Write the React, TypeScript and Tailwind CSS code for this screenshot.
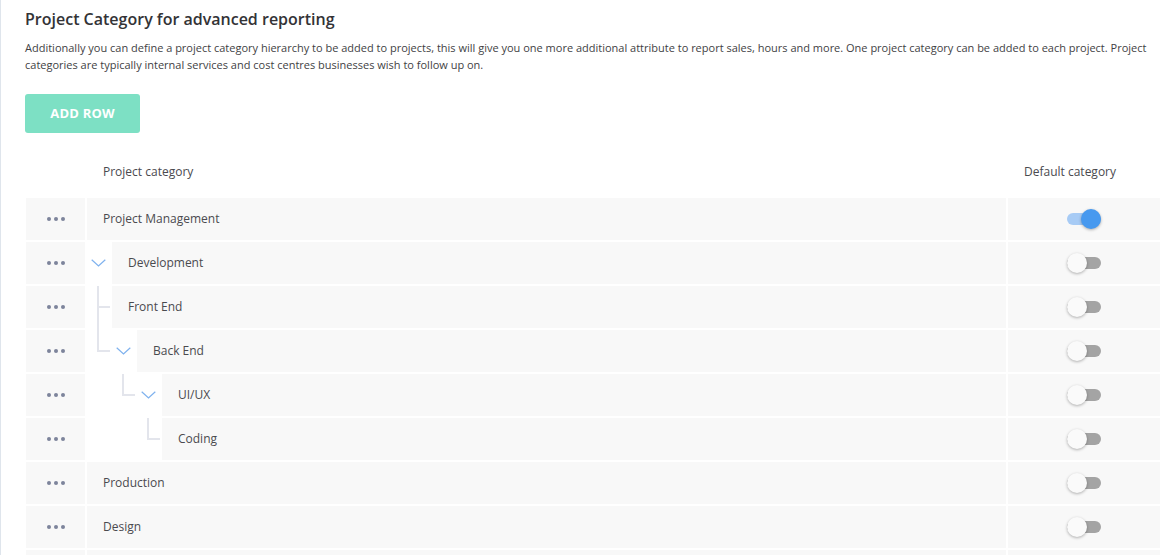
import React from "react";

type Row = {
  name: string;
  level: number;
  hasChildren?: boolean;
  isDefault?: boolean;
  // per slot: "pass" = vertical through, "end" = vertical to center + stub, "mid" = vertical through + stub
  lines?: ("none" | "pass" | "end" | "mid")[];
};

const rows: Row[] = [
  { name: "Project Management", level: 0, isDefault: true },
  { name: "Development", level: 0, hasChildren: true },
  { name: "Front End", level: 1, lines: ["mid"] },
  { name: "Back End", level: 1, hasChildren: true, lines: ["end"] },
  { name: "UI/UX", level: 2, hasChildren: true, lines: ["none", "end"] },
  { name: "Coding", level: 3, lines: ["none", "none", "end"] },
  { name: "Production", level: 0 },
  { name: "Design", level: 0 },
  { name: "", level: 0 },
];

function Dots() {
  return (
    <div className="flex items-center gap-[3px]">
      <span className="w-[4px] h-[4px] rounded-full bg-[#7d849b]" />
      <span className="w-[4px] h-[4px] rounded-full bg-[#7d849b]" />
      <span className="w-[4px] h-[4px] rounded-full bg-[#7d849b]" />
    </div>
  );
}

function Chevron() {
  return (
    <svg width="15" height="8" viewBox="0 0 15 8" fill="none">
      <path d="M0.7 0.7 L7.5 7 L14.3 0.7" stroke="#7fb2ee" strokeWidth="1.2" />
    </svg>
  );
}

function Toggle({ on }: { on?: boolean }) {
  if (on) {
    return (
      <div className="relative w-[34px] h-[20px] flex items-center">
        <div className="w-[34px] h-[12px] rounded-full bg-[#a7cbf5]" />
        <div className="absolute right-0 top-0 w-[20px] h-[20px] rounded-full bg-[#4799ef] shadow-[0_1px_3px_rgba(0,0,0,0.3)]" />
      </div>
    );
  }
  return (
    <div className="relative w-[34px] h-[20px] flex items-center">
      <div className="w-[34px] h-[12px] rounded-full bg-[#a4a4a4]" />
      <div className="absolute left-0 top-0 w-[20px] h-[20px] rounded-full bg-[#fafafa] shadow-[0_1px_3px_rgba(0,0,0,0.3)]" />
    </div>
  );
}

function Slot({ kind }: { kind: "none" | "pass" | "end" | "mid" | "chevron" }) {
  return (
    <div className="relative w-[25px] h-[44px] shrink-0">
      {kind === "chevron" && (
        <div className="absolute left-[4px] top-[17px]">
          <Chevron />
        </div>
      )}
      {(kind === "pass" || kind === "mid") && (
        <div className="absolute left-[10px] top-0 w-[2px] h-[44px] bg-[#e3e5ec]" />
      )}
      {kind === "end" && (
        <div className="absolute left-[10px] top-0 w-[2px] h-[22px] bg-[#e3e5ec]" />
      )}
      {(kind === "end" || kind === "mid") && (
        <div className="absolute left-[10px] top-[20px] w-[13px] h-[2px] bg-[#e3e5ec]" />
      )}
    </div>
  );
}

function TableRow({ row }: { row: Row }) {
  const slots: ("none" | "pass" | "end" | "mid" | "chevron")[] = [];
  for (let i = 0; i < row.level; i++) slots.push(row.lines?.[i] ?? "none");
  if (row.hasChildren) slots.push("chevron");

  return (
    <div className="flex h-[44px]">
      <div className="w-[59px] h-[42px] bg-[#f8f8f8] flex items-center justify-center shrink-0">
        {row.name && <Dots />}
      </div>
      <div className="w-[2px] shrink-0" />
      <div className="flex flex-1 min-w-0">
        {slots.map((s, i) => (
          <Slot key={i} kind={s} />
        ))}
        <div className="flex-1 h-[42px] bg-[#f8f8f8] flex items-center pl-[16px] text-[12px] text-[#4a4a4f]">
          {row.name}
        </div>
      </div>
      <div className="w-[2px] shrink-0" />
      <div className="w-[152px] h-[42px] bg-[#f8f8f8] flex items-center justify-center shrink-0">
        {row.name && <Toggle on={row.isDefault} />}
      </div>
    </div>
  );
}

export default function App() {
  return (
    <div
      className="h-[555px] overflow-hidden bg-white border-l border-[#dfe5ec] pl-[24px] pr-[9px]"
      style={{ fontFamily: '"Open Sans", "Noto Sans", sans-serif' }}
    >
      <h2 className="pt-[7px] text-[16px] leading-[24px] font-semibold text-[#333336]">
        Project Category for advanced reporting
      </h2>
      <p className="mt-[8px] text-[11px] leading-[17px] text-[#3f3f44]">
        Additionally you can define a project category hierarchy to be added to projects, this will give you one more
        additional attribute to report sales, hours and more. One project category can be added to each project. Project
        categories are typically internal services and cost centres businesses wish to follow up on.
      </p>
      <button className="mt-[21px] w-[115px] h-[39px] rounded-[3px] bg-[#7de0c4] text-white text-[13px] font-bold tracking-[0.2px]">
        ADD ROW
      </button>

      <div className="pl-[1px]">
        <div className="flex h-[65px] items-start pt-[31px] text-[12px] leading-[16px] text-[#4a4a4f]">
          <div className="w-[77px] shrink-0" />
          <div className="flex-1">Project category</div>
          <div className="w-[152px] shrink-0 pl-[16px]">Default category</div>
        </div>
        {rows.map((r, i) => (
          <TableRow key={i} row={r} />
        ))}
      </div>
    </div>
  );
}
